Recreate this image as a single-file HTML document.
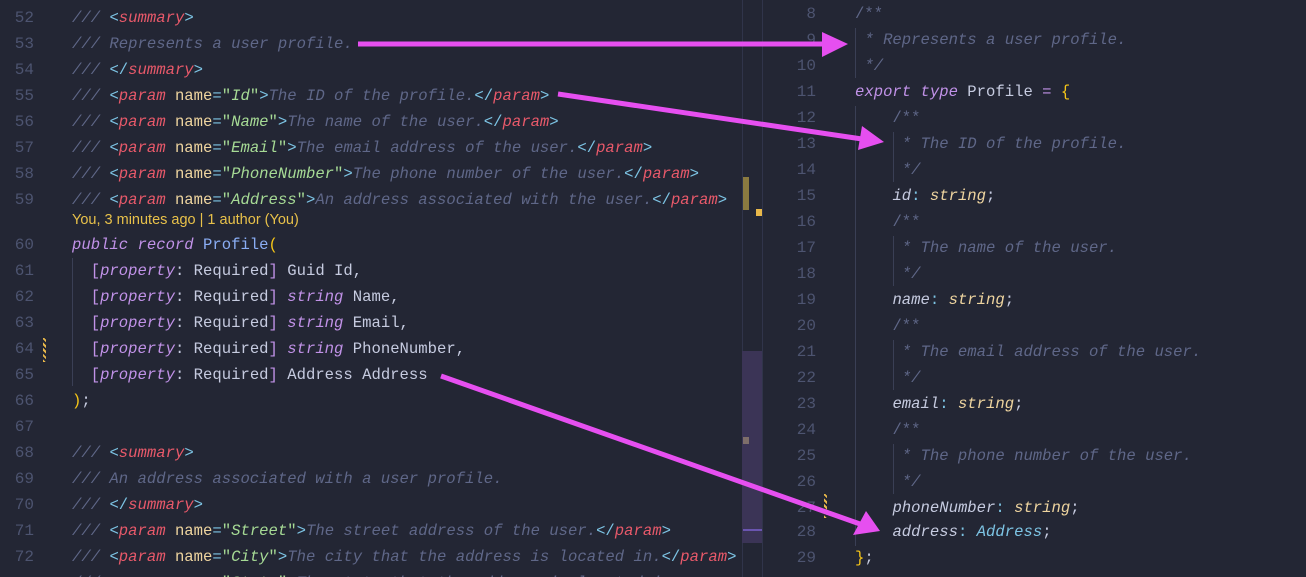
<!DOCTYPE html><html style="overflow:hidden;height:577px"><head><style>
body{margin:0;width:1306px;height:577px;background:#232634;overflow:hidden;position:relative;font-family:"Liberation Mono",monospace;font-size:15.6px}
.l{position:absolute;height:26px;line-height:26px;white-space:pre;color:#c6cbe0}
.n{position:absolute;height:26px;line-height:26px;text-align:right;color:#4d5470;width:40px;font-size:16px}
.c{color:#5f6788;font-style:italic}.cs{color:#5f6788}
.t{color:#e8596a;font-style:italic}.b{color:#7dc4e4}.a{color:#eed49f}.s{color:#a6da95}
.k{color:#c192e8;font-style:italic}.ty{color:#8aadf4}.y{color:#f5c518}.p{color:#c192e8}
.st{color:#eed49f;font-style:italic}
.i{font-style:italic}.tb{color:#7dc4e4;font-style:italic}
.g{position:absolute;width:1px;background:#3a3f55}
</style></head><body>
<div style="position:absolute;left:742px;top:0;width:1px;height:577px;background:#30344a"></div>
<div style="position:absolute;left:762px;top:0;width:1px;height:577px;background:#30344a"></div>
<div style="position:absolute;left:743px;top:177px;width:6px;height:33px;background:#8a7a40"></div>
<div style="position:absolute;left:756px;top:209px;width:6px;height:7px;background:#e8b84a"></div>
<div style="position:absolute;left:742px;top:351px;width:20px;height:192px;background:#3b3456"></div>
<div style="position:absolute;left:743px;top:437px;width:6px;height:7px;background:#7e6e6a"></div>
<div style="position:absolute;left:743px;top:529px;width:19px;height:2px;background:#6a55b0"></div>
<div style="position:absolute;left:43px;top:338px;width:3px;height:24px;background:repeating-linear-gradient(45deg,#e8b84a 0 2px,transparent 2px 4px)"></div>
<div style="position:absolute;left:824px;top:494px;width:3px;height:24px;background:repeating-linear-gradient(45deg,#e8b84a 0 2px,transparent 2px 4px)"></div>
<div class="g" style="left:72px;top:258px;height:128px"></div>
<div class="g" style="left:855px;top:28px;height:50px"></div>
<div class="g" style="left:855px;top:106px;height:440px"></div>
<div class="g" style="left:893px;top:132px;height:50px"></div>
<div class="g" style="left:893px;top:236px;height:50px"></div>
<div class="g" style="left:893px;top:340px;height:50px"></div>
<div class="g" style="left:893px;top:444px;height:50px"></div>

<div class="n" style="left:-6px;top:5px">52</div><div class="l" style="left:72px;top:5px"><span class="c">/// </span><span class="b">&lt;</span><span class="t">summary</span><span class="b">&gt;</span></div>
<div class="n" style="left:-6px;top:31px">53</div><div class="l" style="left:72px;top:31px"><span class="c">/// Represents a user profile.</span></div>
<div class="n" style="left:-6px;top:57px">54</div><div class="l" style="left:72px;top:57px"><span class="c">/// </span><span class="b">&lt;/</span><span class="t">summary</span><span class="b">&gt;</span></div>
<div class="n" style="left:-6px;top:83px">55</div><div class="l" style="left:72px;top:83px"><span class="c">/// </span><span class="b">&lt;</span><span class="t">param</span> <span class="a">name</span><span class="b">=</span><span class="s">"<i>Id</i>"</span><span class="b">&gt;</span><span class="c">The ID of the profile.</span><span class="b">&lt;/</span><span class="t">param</span><span class="b">&gt;</span></div>
<div class="n" style="left:-6px;top:109px">56</div><div class="l" style="left:72px;top:109px"><span class="c">/// </span><span class="b">&lt;</span><span class="t">param</span> <span class="a">name</span><span class="b">=</span><span class="s">"<i>Name</i>"</span><span class="b">&gt;</span><span class="c">The name of the user.</span><span class="b">&lt;/</span><span class="t">param</span><span class="b">&gt;</span></div>
<div class="n" style="left:-6px;top:135px">57</div><div class="l" style="left:72px;top:135px"><span class="c">/// </span><span class="b">&lt;</span><span class="t">param</span> <span class="a">name</span><span class="b">=</span><span class="s">"<i>Email</i>"</span><span class="b">&gt;</span><span class="c">The email address of the user.</span><span class="b">&lt;/</span><span class="t">param</span><span class="b">&gt;</span></div>
<div class="n" style="left:-6px;top:161px">58</div><div class="l" style="left:72px;top:161px"><span class="c">/// </span><span class="b">&lt;</span><span class="t">param</span> <span class="a">name</span><span class="b">=</span><span class="s">"<i>PhoneNumber</i>"</span><span class="b">&gt;</span><span class="c">The phone number of the user.</span><span class="b">&lt;/</span><span class="t">param</span><span class="b">&gt;</span></div>
<div class="n" style="left:-6px;top:187px">59</div><div class="l" style="left:72px;top:187px"><span class="c">/// </span><span class="b">&lt;</span><span class="t">param</span> <span class="a">name</span><span class="b">=</span><span class="s">"<i>Address</i>"</span><span class="b">&gt;</span><span class="c">An address associated with the user.</span><span class="b">&lt;/</span><span class="t">param</span><span class="b">&gt;</span></div>
<div class="l" style="left:72px;top:208px;height:24px;line-height:24px;font-family:'Liberation Sans',sans-serif;font-size:14.5px;color:#e8c14a">You, 3 minutes ago | 1 author (You)</div>
<div class="n" style="left:-6px;top:232px">60</div><div class="l" style="left:72px;top:232px"><span class="k">public record</span> <span class="ty">Profile</span><span class="y">(</span></div>
<div class="n" style="left:-6px;top:258px">61</div><div class="l" style="left:72px;top:258px">  <span class="p">[</span><span class="k">property</span>: Required<span class="p">]</span> Guid Id,</div>
<div class="n" style="left:-6px;top:284px">62</div><div class="l" style="left:72px;top:284px">  <span class="p">[</span><span class="k">property</span>: Required<span class="p">]</span> <span class="k">string</span> Name,</div>
<div class="n" style="left:-6px;top:310px">63</div><div class="l" style="left:72px;top:310px">  <span class="p">[</span><span class="k">property</span>: Required<span class="p">]</span> <span class="k">string</span> Email,</div>
<div class="n" style="left:-6px;top:336px">64</div><div class="l" style="left:72px;top:336px">  <span class="p">[</span><span class="k">property</span>: Required<span class="p">]</span> <span class="k">string</span> PhoneNumber,</div>
<div class="n" style="left:-6px;top:362px">65</div><div class="l" style="left:72px;top:362px">  <span class="p">[</span><span class="k">property</span>: Required<span class="p">]</span> Address Address</div>
<div class="n" style="left:-6px;top:388px">66</div><div class="l" style="left:72px;top:388px"><span class="y">)</span>;</div>
<div class="n" style="left:-6px;top:414px">67</div>
<div class="n" style="left:-6px;top:440px">68</div><div class="l" style="left:72px;top:440px"><span class="c">/// </span><span class="b">&lt;</span><span class="t">summary</span><span class="b">&gt;</span></div>
<div class="n" style="left:-6px;top:466px">69</div><div class="l" style="left:72px;top:466px"><span class="c">/// An address associated with a user profile.</span></div>
<div class="n" style="left:-6px;top:492px">70</div><div class="l" style="left:72px;top:492px"><span class="c">/// </span><span class="b">&lt;/</span><span class="t">summary</span><span class="b">&gt;</span></div>
<div class="n" style="left:-6px;top:518px">71</div><div class="l" style="left:72px;top:518px"><span class="c">/// </span><span class="b">&lt;</span><span class="t">param</span> <span class="a">name</span><span class="b">=</span><span class="s">"<i>Street</i>"</span><span class="b">&gt;</span><span class="c">The street address of the user.</span><span class="b">&lt;/</span><span class="t">param</span><span class="b">&gt;</span></div>
<div class="n" style="left:-6px;top:544px">72</div><div class="l" style="left:72px;top:544px"><span class="c">/// </span><span class="b">&lt;</span><span class="t">param</span> <span class="a">name</span><span class="b">=</span><span class="s">"<i>City</i>"</span><span class="b">&gt;</span><span class="c">The city that the address is located in.</span><span class="b">&lt;/</span><span class="t">param</span><span class="b">&gt;</span></div>
<div class="l" style="left:72px;top:570px;height:7px;overflow:hidden"><span class="c">/// </span><span class="b">&lt;</span><span class="t">param</span> <span class="a">name</span><span class="b">=</span><span class="s">"<i>State</i>"</span><span class="b">&gt;</span><span class="c">The state that the address is located in.</span></div>

<div class="n" style="left:776px;top:1px">8</div><div class="l" style="left:855px;top:1px"><span class="cs">/**</span></div>
<div class="n" style="left:776px;top:27px">9</div><div class="l" style="left:855px;top:27px"><span class="c"> * Represents a user profile.</span></div>
<div class="n" style="left:776px;top:53px">10</div><div class="l" style="left:855px;top:53px"><span class="c"> */</span></div>
<div class="n" style="left:776px;top:79px">11</div><div class="l" style="left:855px;top:79px"><span class="k">export type</span> Profile <span class="p">=</span> <span class="y">{</span></div>
<div class="n" style="left:776px;top:105px">12</div><div class="l" style="left:855px;top:105px">    <span class="cs">/**</span></div>
<div class="n" style="left:776px;top:131px">13</div><div class="l" style="left:855px;top:131px"><span class="c">     * The ID of the profile.</span></div>
<div class="n" style="left:776px;top:157px">14</div><div class="l" style="left:855px;top:157px"><span class="c">     */</span></div>
<div class="n" style="left:776px;top:183px">15</div><div class="l" style="left:855px;top:183px">    <span class="i">id</span><span class="b">:</span> <span class="st">string</span>;</div>
<div class="n" style="left:776px;top:209px">16</div><div class="l" style="left:855px;top:209px">    <span class="cs">/**</span></div>
<div class="n" style="left:776px;top:235px">17</div><div class="l" style="left:855px;top:235px"><span class="c">     * The name of the user.</span></div>
<div class="n" style="left:776px;top:261px">18</div><div class="l" style="left:855px;top:261px"><span class="c">     */</span></div>
<div class="n" style="left:776px;top:287px">19</div><div class="l" style="left:855px;top:287px">    <span class="i">name</span><span class="b">:</span> <span class="st">string</span>;</div>
<div class="n" style="left:776px;top:313px">20</div><div class="l" style="left:855px;top:313px">    <span class="cs">/**</span></div>
<div class="n" style="left:776px;top:339px">21</div><div class="l" style="left:855px;top:339px"><span class="c">     * The email address of the user.</span></div>
<div class="n" style="left:776px;top:365px">22</div><div class="l" style="left:855px;top:365px"><span class="c">     */</span></div>
<div class="n" style="left:776px;top:391px">23</div><div class="l" style="left:855px;top:391px">    <span class="i">email</span><span class="b">:</span> <span class="st">string</span>;</div>
<div class="n" style="left:776px;top:417px">24</div><div class="l" style="left:855px;top:417px">    <span class="cs">/**</span></div>
<div class="n" style="left:776px;top:443px">25</div><div class="l" style="left:855px;top:443px"><span class="c">     * The phone number of the user.</span></div>
<div class="n" style="left:776px;top:469px">26</div><div class="l" style="left:855px;top:469px"><span class="c">     */</span></div>
<div class="n" style="left:776px;top:495px">27</div><div class="l" style="left:855px;top:495px">    <span class="i">phoneNumber</span><span class="b">:</span> <span class="st">string</span>;</div>
<div class="n" style="left:776px;top:519px">28</div><div class="l" style="left:855px;top:519px">    <span class="i">address</span><span class="b">:</span> <span class="tb">Address</span>;</div>
<div class="n" style="left:776px;top:545px">29</div><div class="l" style="left:855px;top:545px"><span class="y">}</span>;</div>

<svg width="1306" height="577" style="position:absolute;left:0;top:0">
<g fill="#e64ff0" stroke="#e64ff0">
<line x1="358" y1="44" x2="826" y2="44" stroke-width="5"/>
<polygon points="848,44 822,32 822,57" stroke="none"/>
<line x1="558" y1="94" x2="862" y2="139" stroke-width="5"/>
<polygon points="884,142 862,126 858,150" stroke="none"/>
<line x1="441" y1="376" x2="860" y2="524" stroke-width="5"/>
<polygon points="880,531 866,511 853,535" stroke="none"/>
</g></svg>
</body></html>
